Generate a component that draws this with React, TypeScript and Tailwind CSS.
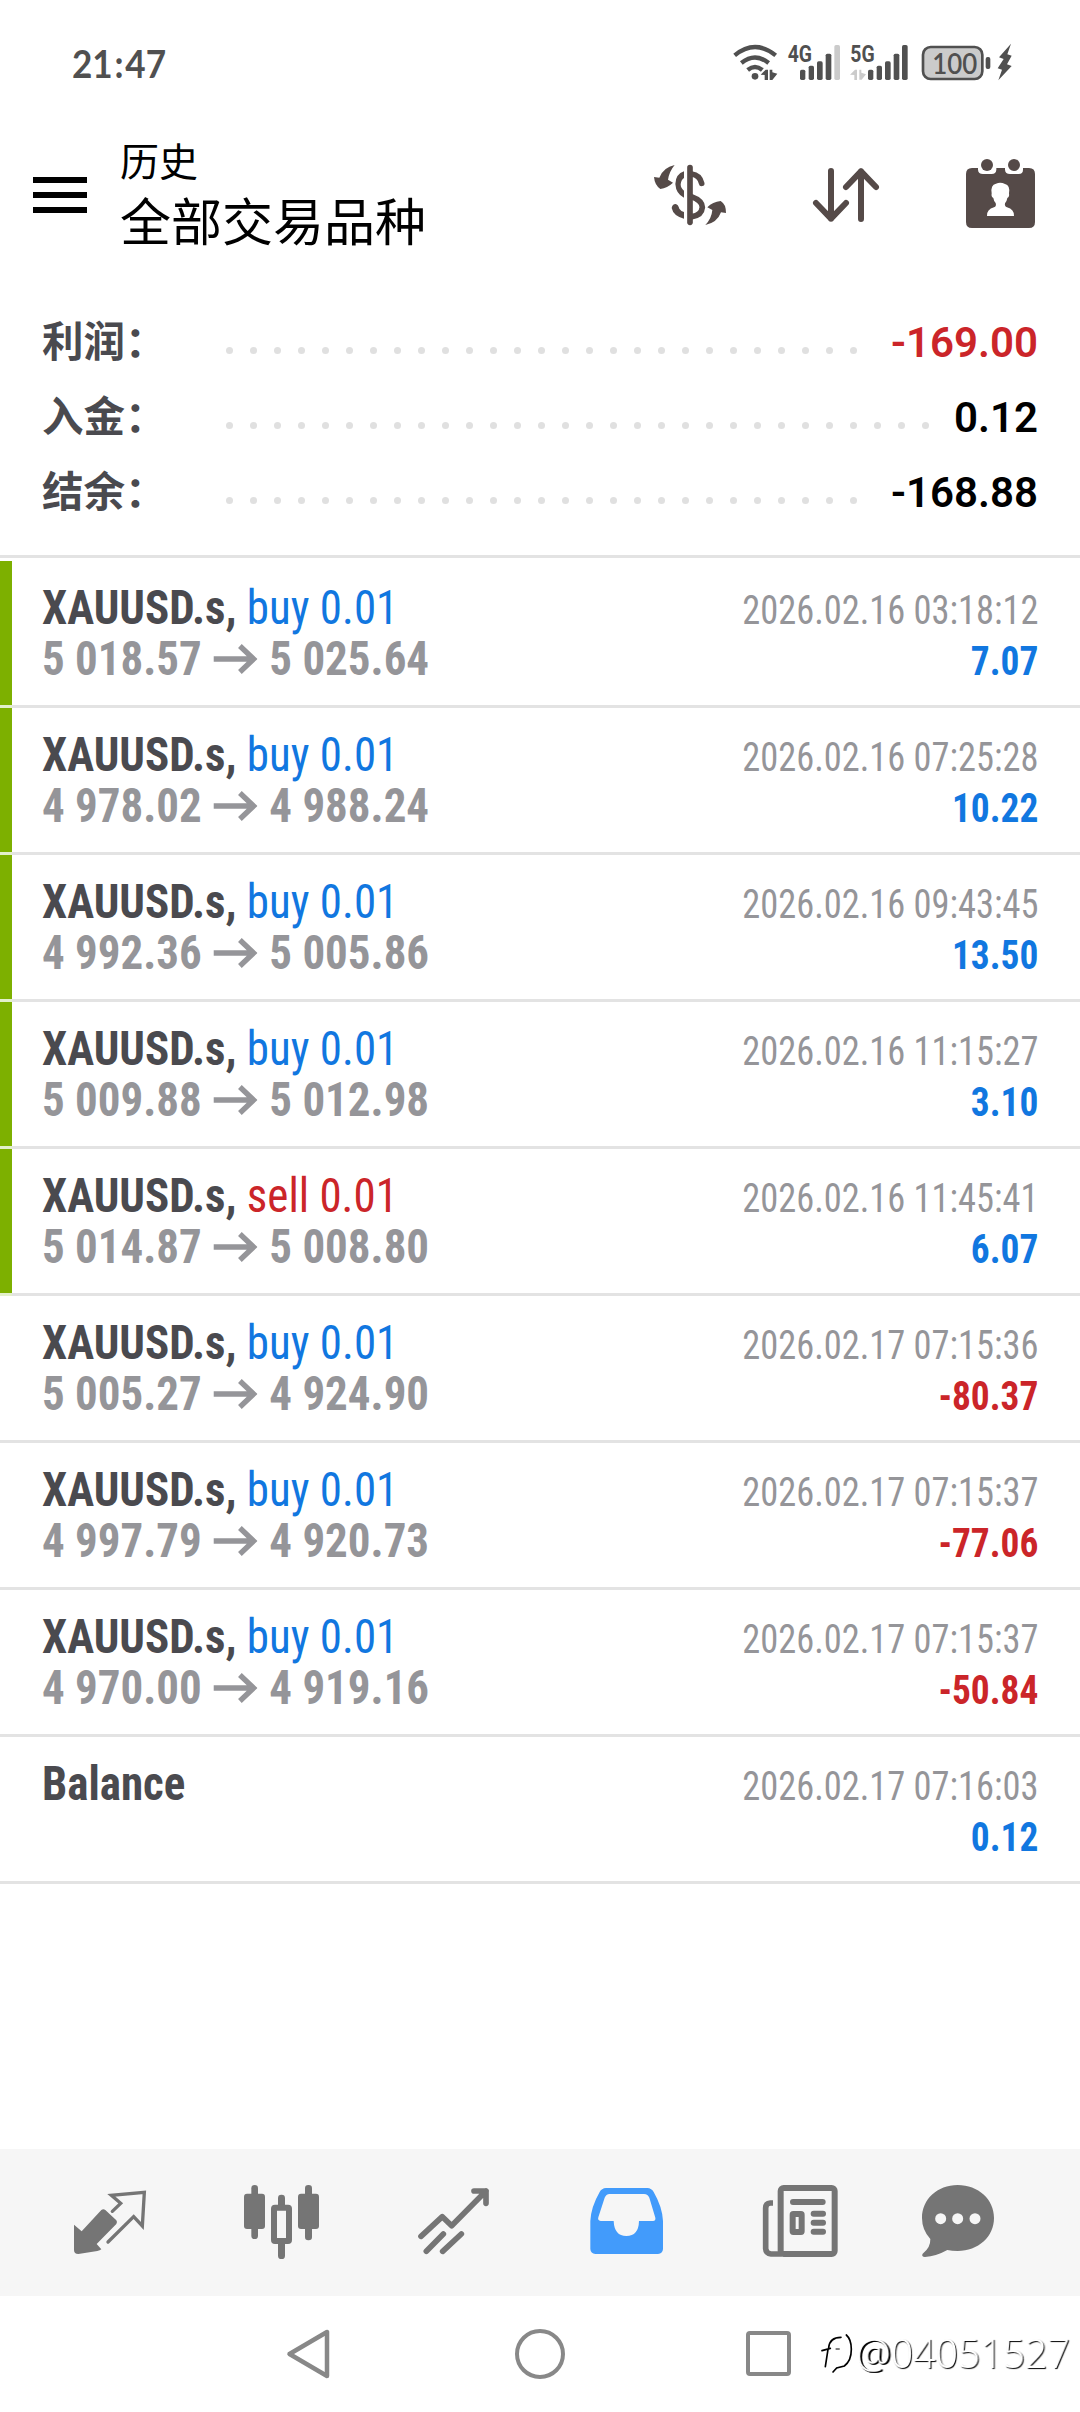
import type { ReactNode } from "react";
import clsx from "clsx";

interface Deal {
  symbol: string;
  side?: "buy" | "sell";
  volume?: string;
  open?: string;
  close?: string;
  time: string;
  profit: string;
  closedByTp?: boolean;
}

const deals: Deal[] = [
  { symbol: "XAUUSD.s", side: "buy", volume: "0.01", open: "5 018.57", close: "5 025.64", time: "2026.02.16 03:18:12", profit: "7.07", closedByTp: true },
  { symbol: "XAUUSD.s", side: "buy", volume: "0.01", open: "4 978.02", close: "4 988.24", time: "2026.02.16 07:25:28", profit: "10.22", closedByTp: true },
  { symbol: "XAUUSD.s", side: "buy", volume: "0.01", open: "4 992.36", close: "5 005.86", time: "2026.02.16 09:43:45", profit: "13.50", closedByTp: true },
  { symbol: "XAUUSD.s", side: "buy", volume: "0.01", open: "5 009.88", close: "5 012.98", time: "2026.02.16 11:15:27", profit: "3.10", closedByTp: true },
  { symbol: "XAUUSD.s", side: "sell", volume: "0.01", open: "5 014.87", close: "5 008.80", time: "2026.02.16 11:45:41", profit: "6.07", closedByTp: true },
  { symbol: "XAUUSD.s", side: "buy", volume: "0.01", open: "5 005.27", close: "4 924.90", time: "2026.02.17 07:15:36", profit: "-80.37" },
  { symbol: "XAUUSD.s", side: "buy", volume: "0.01", open: "4 997.79", close: "4 920.73", time: "2026.02.17 07:15:37", profit: "-77.06" },
  { symbol: "XAUUSD.s", side: "buy", volume: "0.01", open: "4 970.00", close: "4 919.16", time: "2026.02.17 07:15:37", profit: "-50.84" },
  { symbol: "Balance", time: "2026.02.17 07:16:03", profit: "0.12" },
];

const summary = [
  { label: "利润：", value: "-169.00", dots: 27, color: "text-[#cb2529]" },
  { label: "入金：", value: "0.12", dots: 30, color: "text-black" },
  { label: "结余：", value: "-168.88", dots: 27, color: "text-black" },
];

function StatusBar() {
  return (
    <div className="flex h-[120px] items-start pl-[72px]">
      <div className="mt-[34px] w-[661px] origin-left scale-x-[0.9] font-['Lato'] text-[39px] leading-[58px] font-bold text-[#505050]">
        21<span className="mx-[2px]">:</span>47
      </div>
      <div className="mt-[42px] flex h-[42px] text-[#505050]">
        <svg className="w-[47px]" viewBox="99 66 141 126" fill="none" stroke="currentColor" strokeWidth="13">
          <path d="M104 106 Q165 56 227 106" />
          <path d="M124 129 Q165 96 206 129" />
          <path d="M143 150 Q165 132 187 150" />
          <circle cx="165" cy="169" r="10" fill="currentColor" stroke="none" />
          <path d="M182 164 L197 149 L204 149 L204 180 L194 180 L194 165 Z M209 149 H217 V157 L232 161 L217 180 H209 Z" fill="currentColor" stroke="none" />
        </svg>
        <svg className="ml-[7px] w-[54px] overflow-visible" viewBox="261 66 162 126" fill="currentColor">
          <text x="263" y="126" fontFamily="Roboto" fontWeight="700" fontSize="69" textLength="73" lengthAdjust="spacingAndGlyphs">4G</text>
          <rect x="300" y="149" width="16" height="31" rx="5" />
          <rect x="326" y="137" width="16" height="43" rx="5" />
          <rect x="351" y="124" width="17" height="56" rx="5" />
          <rect x="377" y="101" width="17" height="79" rx="5" />
          <rect x="403" y="75" width="17" height="105" rx="5" fill="#cbcbcb" />
        </svg>
        <svg className="ml-[9px] w-[60px] overflow-visible" viewBox="450 66 180 126" fill="currentColor">
          <text x="451" y="126" fontFamily="Roboto" fontWeight="700" fontSize="69" textLength="73" lengthAdjust="spacingAndGlyphs">5G</text>
          <path d="M450 164 L465 149 H471 V180 H463 V165 Z M478 149 H484 V158 L498 163 L485 179 H478 Z" fill="#cbcbcb" />
          <rect x="504" y="149" width="16" height="31" rx="5" />
          <rect x="530" y="137" width="16" height="43" rx="5" />
          <rect x="555" y="124" width="17" height="56" rx="5" />
          <rect x="581" y="101" width="17" height="79" rx="5" />
          <rect x="606" y="75" width="17" height="105" rx="5" />
        </svg>
        <svg className="ml-[11px] w-[71px]" viewBox="663 66 213 126" fill="currentColor">
          <rect x="669" y="81" width="178" height="96" rx="23" fill="#cbcbcb" stroke="currentColor" strokeWidth="8" />
          <rect x="857" y="111" width="14" height="36" rx="6" />
          <text x="697" y="161" fontFamily="Lato" fontWeight="600" fontSize="87" textLength="135" lengthAdjust="spacingAndGlyphs">100</text>
        </svg>
        <svg className="ml-[4px] w-[17px]" viewBox="888 66 51 126" fill="currentColor">
          <path d="M933 71 L897 112 L911 117 L893 145 L906 149 L895 181 L935 138 L921 133 L935 107 L922 103 Z" />
        </svg>
      </div>
    </div>
  );
}

function Header() {
  return (
    <header className="flex h-[185px] items-start pl-[33px] text-black">
      <button className="mt-[57px] flex w-[54px] flex-col gap-[9px]">
        <span className="h-[6px] w-full bg-black" />
        <span className="h-[6px] w-full bg-black" />
        <span className="h-[6px] w-full bg-black" />
      </button>
      <div className="mt-[9px] ml-[33px] w-[530px] font-['Noto_Sans_CJK_SC',sans-serif]">
        <div className="text-[39px] leading-[60px]">历史</div>
        <div className="text-[51px] leading-[60px]">全部交易品种</div>
      </div>
      <div className="mt-[36px] flex text-[#554a48]">
        <svg className="size-[80px]" viewBox="90 78 240 240" fill="none" stroke="currentColor" strokeWidth="17" strokeLinecap="round">
          <path d="M210 113 V277" />
          <path d="M245 160 Q239 135 215 132" />
          <path d="M192 124 Q167 132 166 162 Q168 192 192 203 V182 Q182 175 182 163 Q184 148 192 144 Z" fill="currentColor" stroke="none" />
          <path d="M214 200 Q247 212 247 232 Q245 256 216 260" />
          <path d="M192 266 Q160 258 155 234 Q157 222 167 222 Q174 223 178 236 Q182 243 192 246 Z" fill="currentColor" stroke="none" />
          <path d="M164 105 Q130 112 118 143 L102 141 Q104 165 121 177 Q142 174 159 158 L144 149 Q148 124 164 105 Z" fill="currentColor" stroke="none" />
          <path d="M256 285 Q292 278 303 247 L318 249 Q318 222 302 213 Q278 215 262 232 L277 240 Q275 265 256 285 Z" fill="currentColor" stroke="none" />
        </svg>
        <svg className="ml-[80px] size-[80px]" viewBox="570 78 240 240" fill="none" stroke="currentColor" strokeWidth="18" strokeLinecap="round" strokeLinejoin="round">
          <path d="M633 123 V266 M588 219 L633 266 L678 219" />
          <path d="M723 267 V124 M678 171 L723 124 L768 171" />
        </svg>
        <svg className="ml-[70px] size-[80px]" viewBox="1020 78 240 240" fill="currentColor">
          <path d="M1056 114 H1074 V119 Q1075 132 1089 132 H1115 Q1128 132 1129 119 V114 H1155 V119 Q1156 132 1170 132 H1196 Q1209 132 1209 119 V114 H1227 Q1245 114 1245 132 V276 Q1245 294 1227 294 H1056 Q1038 294 1038 276 V132 Q1038 114 1056 114 Z" />
          <circle cx="1101" cy="105" r="18" />
          <circle cx="1182" cy="105" r="18" />
          <path d="M1101 258 Q1100 238 1122 232 Q1130 229 1127 219 Q1121 212 1120 204 Q1113 201 1115 190 Q1111 165 1128 161 Q1141 155 1155 162 Q1171 166 1167 190 Q1169 201 1162 204 Q1161 212 1155 220 Q1153 229 1161 232 Q1183 238 1182 258 Z" fill="#fff" />
        </svg>
      </div>
    </header>
  );
}

function SummaryRow({ label, value, dots, color }: (typeof summary)[number]) {
  return (
    <div className="flex h-[75px] items-center pr-[42px] pl-[42px] leading-[75px]">
      <div className="mb-[6px] w-[184px] font-['Noto_Sans_CJK_SC',sans-serif] text-[41.500px] font-bold text-[#4a4a4f]">{label}</div>
      <div className="mt-[16px] flex gap-[17px]">
        {Array.from({ length: dots }, (_, i) => (
          <span key={i} className="size-[7px] rounded-full bg-[#e0e0e0]" />
        ))}
      </div>
      <div className={clsx("ml-auto font-['Roboto'] text-[42px] font-semibold", color)}>{value}</div>
    </div>
  );
}

function DealRow({ deal }: { deal: Deal }) {
  const isLoss = deal.profit.startsWith("-");
  return (
    <div className="flex h-[147px] font-['Roboto'] [font-stretch:75%]">
      <div className={clsx("flex w-[12px] flex-col justify-end", deal.closedByTp && "bg-[#7db000]")}>
        <div className={clsx("h-[3px]", deal.closedByTp ? "bg-[#e3f0cb]" : "bg-[#e3e3e3]")} />
      </div>
      <div className="flex flex-1 justify-between border-b-[3px] border-[#e3e3e3] pt-[21px] pr-[42px] pl-[30px]">
        <div className="origin-left scale-x-[0.937] text-[48px] leading-[51px]">
          <div>
            <span className="font-bold text-[#4a4a4f]">{deal.symbol}{deal.side && ","}</span>
            {deal.side && (
              <span className={deal.side === "buy" ? "text-[#1177e0]" : "text-[#cb2529]"}> {deal.side} {deal.volume}</span>
            )}
          </div>
          {deal.open && (
            <div className="flex items-center font-bold text-[#959599]">
              {deal.open}
              <svg className="mr-[13px] ml-[12px] h-[30px] w-[47px]" viewBox="0 0 45 30" preserveAspectRatio="none" fill="none" stroke="currentColor" strokeWidth="5.500">
                <path d="M0 15 H41 M27 2 L41 15 L27 28" />
              </svg>
              {deal.close}
            </div>
          )}
        </div>
        <div className="pt-[3px] text-right text-[40px] leading-[51px]">
          <div className="origin-right scale-x-[0.91] text-[#959599]">{deal.time}</div>
          <div className={clsx("origin-right scale-x-[0.935] font-bold", isLoss ? "text-[#cb2529]" : "text-[#1177e0]")}>{deal.profit}</div>
        </div>
      </div>
    </div>
  );
}

function TabIcon({ viewBox, className, children }: { viewBox: string; className?: string; children: ReactNode }) {
  return (
    <svg className={clsx("size-[85px]", className)} viewBox={viewBox} fill="none" stroke="currentColor" strokeLinecap="round" strokeLinejoin="round">
      {children}
    </svg>
  );
}

function TabBar() {
  return (
    <nav className="flex h-[147px] bg-[#f6f6f6] pt-[31px] pl-[70px] text-[#757575]">
      <TabIcon viewBox="90 120 255 255">
        <path d="M102 254 L125 274 L184 210 Q190 205 196 210 L229 241 Q233 246 229 252 L170 312 L184 328 Q180 332 172 333 L115 342 Q102 342 102 330 Z" fill="currentColor" stroke="none" />
        <path d="M217 214 L242 190 L214 166 L313 157 L307 258 L281 230 L204 306" strokeWidth="10" strokeLinejoin="miter" />
      </TabIcon>
      <TabIcon className="ml-[84px]" viewBox="597 120 255 255">
        <g fill="currentColor" stroke="none">
          <rect x="634" y="135" width="20" height="162" rx="10" />
          <rect x="612" y="161" width="63" height="106" rx="9" />
          <rect x="795" y="135" width="21" height="166" rx="10" />
          <rect x="774" y="161" width="63" height="106" rx="9" />
          <rect x="714" y="164" width="21" height="60" rx="10" />
          <rect x="714" y="290" width="21" height="67" rx="10" />
        </g>
        <rect x="702" y="203" width="45" height="100" rx="3" strokeWidth="18" fill="#f6f6f6" />
      </TabIcon>
      <TabIcon className="ml-[86px]" viewBox="1110 120 255 255">
        <path d="M1143 289 L1207 230 L1235 257 L1338 153 M1302 153 H1338 V190" strokeWidth="17" />
        <path d="M1159 334 L1210 282 M1208 334 L1264 282" strokeWidth="17" />
      </TabIcon>
      <TabIcon className="ml-[89px] text-[#429bfb]" viewBox="72 120 255 255">
        <path d="M138 144 H262 Q275 145 281 156 Q307 201 309 243 V327 Q308 341 294 342 H106 Q92 341 91 327 V243 Q93 201 119 156 Q125 145 138 144 Z" fill="currentColor" stroke="none" />
        <path d="M149 162 H252 Q264 163 268 173 L286 233 Q288 242 279 243 H237 Q236 288 199 288 Q163 288 161 243 H122 Q112 242 115 232 L134 173 Q138 163 149 162 Z" fill="#f6f6f6" stroke="none" />
      </TabIcon>
      <TabIcon className="ml-[89px]" viewBox="594 120 255 255">
        <rect x="662" y="144" width="162" height="198" rx="9" strokeWidth="18" />
        <path d="M639 189 H631 Q617 190 617 204 V326 Q618 341 633 342 H665" strokeWidth="17" strokeLinecap="butt" />
        <path d="M699 186 H788 M761 221 H789 M761 248 H789 M761 275 H789" strokeWidth="18" />
        <rect x="698" y="222" width="27" height="54" rx="2" strokeWidth="18" />
      </TabIcon>
      <TabIcon className="ml-[73px]" viewBox="1068 120 255 255">
        <path d="M1193 135 C1255 135 1302 178 1302 234 C1302 290 1255 333 1193 333 Q1176 333 1162 330 Q1128 349 1095 351 Q1083 350 1088 341 Q1112 323 1111 297 Q1086 270 1086 234 C1086 178 1132 135 1193 135 Z" fill="currentColor" stroke="none" />
        <g fill="#f6f6f6" stroke="none">
          <circle cx="1142" cy="236" r="16.500" />
          <circle cx="1193" cy="236" r="16.500" />
          <circle cx="1245" cy="236" r="16.500" />
        </g>
      </TabIcon>
    </nav>
  );
}

function SystemNav() {
  return (
    <div className="relative flex h-[116px] pt-[32px] pl-[285px]">
      <svg className="h-[54px] w-[48px]" viewBox="0 0 48 54" fill="none" stroke="#888" strokeWidth="4.500" strokeLinejoin="round">
        <path d="M42 4 V48 L4.500 26 Z" />
      </svg>
      <div className="mt-px ml-[182px] size-[50px] rounded-full border-[4px] border-[#888]" />
      <div className="mt-[3px] ml-[181px] size-[45px] rounded-[4px] border-[4px] border-[#888]" />
      <div className="absolute top-[30px] left-[820px] flex items-center">
        <svg className="h-[44px] w-[36px]" viewBox="360 135 108 132" fill="none" stroke="#000" strokeWidth="5" strokeLinecap="round">
          <path d="M366 194 L391 187 M384 190 L376 242 M386 185 Q389 154 423 154" />
          <path d="M439 147 Q454 160 454 190 Q454 225 433 240 L410 246 L399 258" />
          <path d="M408 189 H418" strokeWidth="3" />
        </svg>
        <span className="origin-left scale-x-[0.98] font-['Noto_Sans'] text-[40px] leading-[54px] font-light text-white will-change-transform [text-shadow:1px_1px_1px_#000]">
          <span className="[text-shadow:1px_1px_0_#000,2px_1px_0_#000]">@</span>04051527
        </span>
      </div>
    </div>
  );
}

export default function App() {
  return (
    <div className="flex h-[2412px] w-[1080px] flex-col overflow-hidden bg-white">
      <StatusBar />
      <Header />
      <section className="h-[253px] border-b-[3px] border-[#e3e3e3]">
        {summary.map((row) => (
          <SummaryRow key={row.label} {...row} />
        ))}
      </section>
      <main className="flex-1 pt-[3px]">
        {deals.map((deal, i) => (
          <DealRow key={i} deal={deal} />
        ))}
      </main>
      <TabBar />
      <SystemNav />
    </div>
  );
}
